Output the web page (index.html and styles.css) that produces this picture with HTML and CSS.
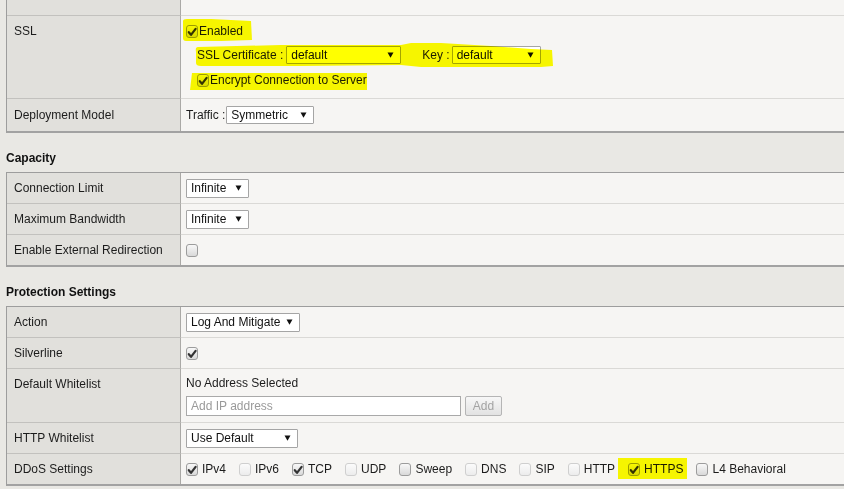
FILE: index.html
```html
<!DOCTYPE html>
<html>
<head>
<meta charset="utf-8">
<link rel="stylesheet" href="styles.css">
</head>
<body>
<div class="page">

  <div class="tbl cut">
    <div class="row r-top"><div class="lab"></div><div class="val"></div></div>
    <div class="row r-ssl">
      <div class="lab">SSL</div>
      <div class="val ssl">
        <label class="chk tight"><span class="cb on"><svg viewBox="0 0 12 12"><path d="M2.8 6.2 L5 8.8 L9.6 2.8"/></svg></span>Enabled</label>
        <div class="ssl-line">
          <span class="txt">SSL Certificate :</span>
          <span class="sel w-cert"><span>default</span><svg class="arr" viewBox="0 0 7 6"><polygon points="0.5,0.5 6.5,0.5 3.5,5.8"/></svg></span>
          <span class="txt key">Key :</span>
          <span class="sel w-key"><span>default</span><svg class="arr" viewBox="0 0 7 6"><polygon points="0.5,0.5 6.5,0.5 3.5,5.8"/></svg></span>
        </div>
        <label class="chk tight enc"><span class="cb on"><svg viewBox="0 0 12 12"><path d="M2.8 6.2 L5 8.8 L9.6 2.8"/></svg></span>Encrypt Connection to Server</label>
        <svg class="marker" viewBox="0 0 400 82" width="400" height="82">
          <path d="M2 5 Q2 3 6 3 L30 3 L70 5 L71 24 L40 25 L5 25 Q2 25 2 22 Z"/>
          <path d="M17 31 Q14 31 15 36 L15 47 Q15 50 20 50 L120 50 L220 49 L240 51 L280 51 L360 51 L372 50 L371 34 L350 33 L310 30 L260 27 L230 27 L220 29 L100 29 Z"/>
          <path d="M11 57 L186 57 L186 74 L9 74 Z"/>
        </svg>
      </div>
    </div>
    <div class="row r-dep">
      <div class="lab">Deployment Model</div>
      <div class="val mid">
        <span class="txt">Traffic :</span>
        <span class="sel w-sym"><span>Symmetric</span><svg class="arr" viewBox="0 0 7 6"><polygon points="0.5,0.5 6.5,0.5 3.5,5.8"/></svg></span>
      </div>
    </div>
  </div>

  <h2 class="sec">Capacity</h2>
  <div class="tbl">
    <div class="row">
      <div class="lab">Connection Limit</div>
      <div class="val mid"><span class="sel w-inf"><span>Infinite</span><svg class="arr" viewBox="0 0 7 6"><polygon points="0.5,0.5 6.5,0.5 3.5,5.8"/></svg></span></div>
    </div>
    <div class="row">
      <div class="lab">Maximum Bandwidth</div>
      <div class="val mid"><span class="sel w-inf"><span>Infinite</span><svg class="arr" viewBox="0 0 7 6"><polygon points="0.5,0.5 6.5,0.5 3.5,5.8"/></svg></span></div>
    </div>
    <div class="row">
      <div class="lab">Enable External Redirection</div>
      <div class="val mid"><span class="cb"></span></div>
    </div>
  </div>

  <h2 class="sec">Protection Settings</h2>
  <div class="tbl">
    <div class="row">
      <div class="lab">Action</div>
      <div class="val mid"><span class="sel w-log"><span>Log And Mitigate</span><svg class="arr" viewBox="0 0 7 6"><polygon points="0.5,0.5 6.5,0.5 3.5,5.8"/></svg></span></div>
    </div>
    <div class="row">
      <div class="lab">Silverline</div>
      <div class="val mid"><span class="cb on"><svg viewBox="0 0 12 12"><path d="M2.8 6.2 L5 8.8 L9.6 2.8"/></svg></span></div>
    </div>
    <div class="row r-wl">
      <div class="lab">Default Whitelist</div>
      <div class="val wl">
        <div>No Address Selected</div>
        <div class="wl-add">
          <span class="inp">Add IP address</span>
          <span class="btn">Add</span>
        </div>
      </div>
    </div>
    <div class="row">
      <div class="lab">HTTP Whitelist</div>
      <div class="val mid"><span class="sel w-use"><span>Use Default</span><svg class="arr" viewBox="0 0 7 6"><polygon points="0.5,0.5 6.5,0.5 3.5,5.8"/></svg></span></div>
    </div>
    <div class="row">
      <div class="lab">DDoS Settings</div>
      <div class="val mid ddos">
        <label class="chk"><span class="cb on"><svg viewBox="0 0 12 12"><path d="M2.8 6.2 L5 8.8 L9.6 2.8"/></svg></span>IPv4</label>
        <label class="chk"><span class="cb dis"></span>IPv6</label>
        <label class="chk"><span class="cb on"><svg viewBox="0 0 12 12"><path d="M2.8 6.2 L5 8.8 L9.6 2.8"/></svg></span>TCP</label>
        <label class="chk"><span class="cb dis"></span>UDP</label>
        <label class="chk"><span class="cb"></span>Sweep</label>
        <label class="chk"><span class="cb dis"></span>DNS</label>
        <label class="chk"><span class="cb dis"></span>SIP</label>
        <label class="chk"><span class="cb dis"></span>HTTP</label>
        <label class="chk hl-wrap"><span class="cb on"><svg viewBox="0 0 12 12"><path d="M2.8 6.2 L5 8.8 L9.6 2.8"/></svg></span>HTTPS<span class="hl"></span></label>
        <label class="chk"><span class="cb"></span>L4 Behavioral</label>
      </div>
    </div>
  </div>

</div>
</body>
</html>
```

FILE: styles.css
```css
* { box-sizing: border-box; }

body {
  margin: 0;
  background: #e9e8e4;
  font: 12px/14px "Liberation Sans", Arial, sans-serif;
  color: #1c1c1c;
  overflow: hidden;
}

.page {
  padding-left: 6px;
  width: 844px;
}

.tbl {
  border-left: 1px solid #9d9d9d;
  border-top: 1px solid #9d9d9d;
  border-bottom: 2px solid #a2a2a2;
}
.tbl.cut { border-top: none; }

.row {
  display: grid;
  grid-template-columns: 174px 1fr;
}

.lab {
  background: #e1e0dc;
  border-right: 1px solid #aaa9a6;
  border-bottom: 1px solid #c2c1be;
  padding: 8px 0 0 7px;
  height: 31px;
}
.val {
  background: #f6f5f3;
  border-bottom: 1px solid #dad9d6;
  padding: 8px 0 0 5px;
  height: 31px;
}
.row:last-child > div { border-bottom: none; height: 30px; }

.val.mid {
  display: flex;
  align-items: center;
  padding-top: 0;
}

.row.r-top > div { height: 16px; padding-top: 0; }
.row.r-ssl > div { height: 83px; }
.row.r-dep > div { height: 32px; }
.row.r-dep > .lab { padding-top: 9px; }
.row.r-wl > div { height: 54px; }
.val.wl { padding-top: 7px; }

.sec {
  margin: 0;
  font-size: 12px;
  line-height: 14px;
  font-weight: bold;
  color: #111;
  padding: 18px 0 7px 0;
  height: 39px;
}

/* selects */
.sel {
  display: inline-flex;
  align-items: center;
  justify-content: space-between;
  height: 19px;
  background: #fff;
  border: 1px solid #a5a5a5;
  border-radius: 1px;
  padding: 0 6px 0 4px;
  color: #111;
}
.sel .arr { width: 7px; height: 6px; fill: #111; }
.w-inf { width: 63px; }
.w-log { width: 114px; }
.w-use { width: 112px; }
.w-sym { width: 88px; height: 18px; margin-left: 1px; }
.w-cert { width: 115px; height: 18px; margin-left: 3px; }
.w-key { width: 89px; height: 18px; margin-left: 2px; }

/* checkboxes */
.cb {
  display: inline-block;
  width: 12px;
  height: 13px;
  border: 1px solid #9c9c9c;
  border-radius: 3px;
  background: linear-gradient(#f8f8f8, #d9d9d9);
  flex: none;
  position: relative;
}
.cb.dis {
  border-color: #cfcfcf;
  background: linear-gradient(#fbfbfb, #ececec);
}
.cb svg {
  position: absolute;
  left: -1px;
  top: 0;
  width: 12px;
  height: 12px;
  fill: none;
  stroke: #333;
  stroke-width: 2.2;
  stroke-linecap: round;
  stroke-linejoin: round;
}

.chk {
  display: inline-flex;
  align-items: center;
  gap: 4px;
}
.chk.tight { gap: 1px; }

/* SSL */
.ssl { position: relative; }
.ssl .chk { display: flex; height: 14px; }
.ssl-line {
  display: flex;
  align-items: center;
  margin: 8px 0 0 11px;
}
.ssl-line .key { margin-left: 21px; }
.chk.enc { margin: 9px 0 0 11px; }

.marker {
  position: absolute;
  left: 0;
  top: 0;
  fill: #ffff00;
  mix-blend-mode: multiply;
}

/* whitelist */
.wl-add {
  display: flex;
  align-items: center;
  gap: 4px;
  margin-top: 6px;
}
.inp {
  display: inline-block;
  width: 275px;
  height: 20px;
  border: 1px solid #a9a9a9;
  background: #fff;
  color: #9a9a9a;
  padding: 2px 0 0 4px;
}
.btn {
  display: inline-block;
  width: 37px;
  height: 20px;
  border: 1px solid #b5b5b5;
  border-radius: 2px;
  background: linear-gradient(#f7f7f7, #e2e2e2);
  color: #a3a3a3;
  text-align: center;
  padding-top: 2px;
}

/* ddos */
.ddos { gap: 13px; }
.hl-wrap { position: relative; }
.hl {
  position: absolute;
  left: -10px;
  right: -4px;
  top: -4px;
  bottom: -3px;
  background: #ffff00;
  mix-blend-mode: multiply;
}
```
